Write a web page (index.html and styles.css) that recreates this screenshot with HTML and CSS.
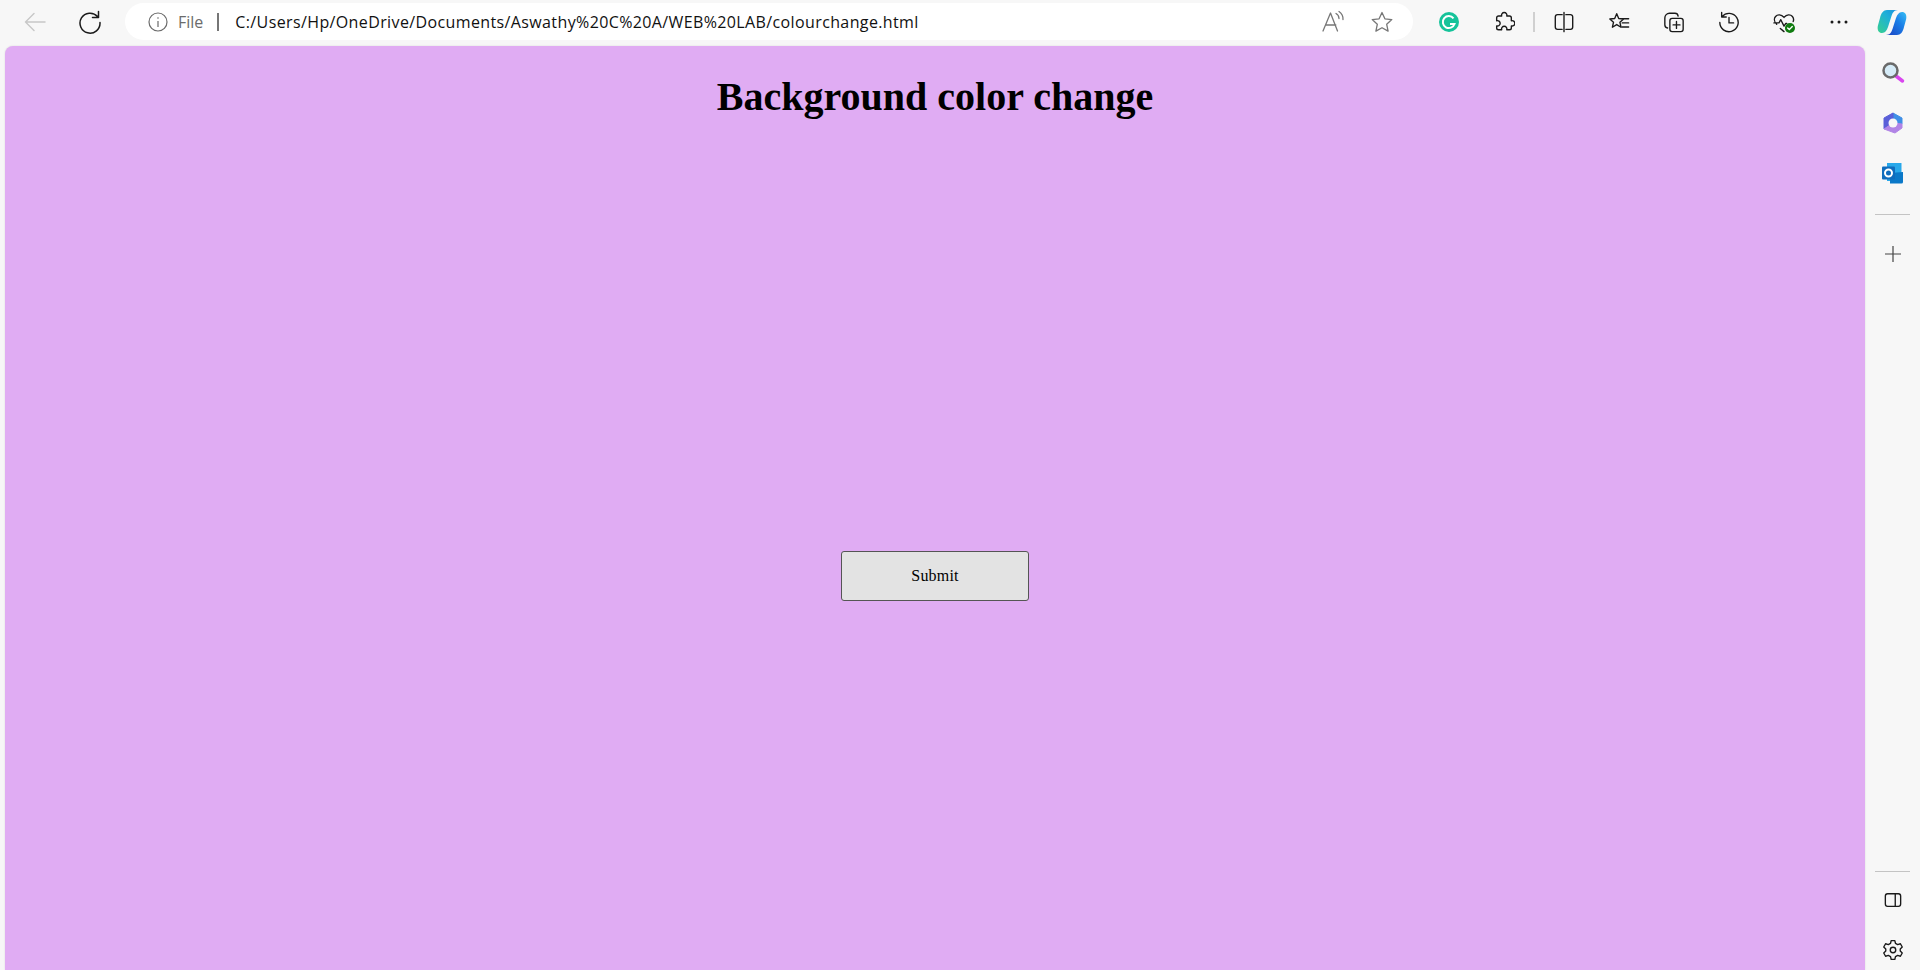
FILE: index.html
```html
<!DOCTYPE html>
<html lang="en">
<head>
    <meta charset="UTF-8">
    <title>Background color change</title>
    <link rel="stylesheet" href="styles.css">
</head>
<body>
    <header class="toolbar">
        <div class="nav">
            <svg class="icon back" viewBox="0 0 24 24"><path d="M22 12H2.500M11 3.500 2.500 12l8.500 8.500"/></svg>
            <svg class="icon" viewBox="0 0 24 24"><path d="M19.500 6.500A10 10 0 1 0 22 12.500M20.500 1.500v6h-6"/></svg>
        </div>
        <div class="address">
            <svg class="info" viewBox="0 0 20 20"><circle cx="10" cy="10" r="9"/><path d="M10 9v6M10 5.200v1.600"/></svg>
            <span class="scheme">File</span>
            <span class="bar"></span>
            <span class="url">C:/Users/Hp/OneDrive/Documents/Aswathy%20C%20A/WEB%20LAB/colourchange.html</span>
            <svg class="addr-icon read" viewBox="0 0 24 24"><path d="M2 21 9.500 3l7 18M4.800 15h10M15 3.500a6 6 0 0 1 3 5M18 1.500a9 9 0 0 1 4 8"/></svg>
            <svg class="addr-icon" viewBox="0 0 24 24"><path d="m12 2.500 2.900 6.300 6.900.8-5.100 4.700 1.400 6.800-6.100-3.400-6.100 3.400 1.400-6.800-5.100-4.700 6.900-.8z"/></svg>
        </div>
        <div class="tools">
            <span class="slot">
                <svg class="grammarly" viewBox="0 0 20 20"><circle cx="10" cy="10" r="10" fill="#15c39a"/><path d="M14.500 6.300A6 6 0 1 0 15.500 12H11" fill="none" stroke="#fff" stroke-width="2"/></svg>
            </span>
            <span class="slot">
                <svg class="icon" viewBox="0 0 24 24"><path d="M9.500 5.500a2.900 2.900 0 1 1 5.500 0H18a2 2 0 0 1 2 2v3.200a2.900 2.900 0 1 1 0 5.500v2.300a2 2 0 0 1-2 2h-3a2.900 2.900 0 1 0-5.500 0H6a2 2 0 0 1-2-2v-2.300a2.900 2.900 0 1 0 0-5.500V7.500a2 2 0 0 1 2-2z"/></svg>
            </span>
            <span class="sep"></span>
            <span class="slot">
                <svg class="icon" viewBox="0 0 24 24"><path d="M10 4H5a2.500 2.500 0 0 0-2.500 2.500v11A2.500 2.500 0 0 0 5 20h5M14 4h5a2.500 2.500 0 0 1 2.500 2.500v11A2.500 2.500 0 0 1 19 20h-5M12 1.500v21"/></svg>
            </span>
            <span class="slot">
                <svg class="icon" viewBox="0 0 24 24"><path d="m9.500 3 2.200 5.200 5.300.5-4 3.600 1.200 5.400-4.700-2.900-4.700 2.900 1.200-5.400-4-3.600 5.300-.5zM16 8.500h6.500M15.500 13h7M15.500 17.500h7"/></svg>
            </span>
            <span class="slot">
                <svg class="icon" viewBox="0 0 24 24"><rect x="7.500" y="8" width="14.500" height="14.500" rx="2.500"/><path d="M14.700 11.500v7.500M11 15.200h7.500M5 18.500A3.500 3.500 0 0 1 2 15V7.500A5 5 0 0 1 7 2.500h6a3.500 3.500 0 0 1 3.500 3"/></svg>
            </span>
            <span class="slot">
                <svg class="icon" viewBox="0 0 24 24"><path d="M4.500 6A10 10 0 1 1 2 12.500M4 1.500v5h5M12 7v6h5"/></svg>
            </span>
            <span class="slot">
                <svg class="icon" viewBox="0 0 24 24"><path d="M4 14.500C1 11.500 1 8 2.800 6c2.200-2.500 6.200-2.400 9.200 1 3-3.400 7-3.500 9.200-1 1.300 1.500 1.600 3.500.8 5.500M1 13h5.500l2-3.500 3.500 7 2-3h1M8 19l4 3.500"/><circle cx="18.500" cy="18.500" r="5.500" fill="#107c10" stroke="none"/><path class="tick" d="m16 18.500 1.800 1.800 3.200-3.400"/></svg>
            </span>
            <span class="slot">
                <svg class="more" viewBox="0 0 20 4"><circle cx="3" cy="2" r="1.500"/><circle cx="10" cy="2" r="1.500"/><circle cx="17" cy="2" r="1.500"/></svg>
            </span>
            <span class="copilot-slot">
                <svg class="copilot" viewBox="0 0 30 27">
                    <defs>
                        <linearGradient id="copA" x1="0" y1="1" x2="1" y2="0"><stop offset="0" stop-color="#37d08f"/><stop offset=".6" stop-color="#1fb0d8"/><stop offset="1" stop-color="#1a8fe0"/></linearGradient>
                        <linearGradient id="copB" x1="0" y1="1" x2="1" y2="0"><stop offset="0" stop-color="#1b3fc0"/><stop offset=".6" stop-color="#1b80e8"/><stop offset="1" stop-color="#38c0f5"/></linearGradient>
                    </defs>
                    <path d="M10 1H21C17 1 15.500 4 14.500 7L11 18C10 21 8 24 5 24C2 24 0 21.500 .8 17L3 9C4 4 6.500 1 10 1z" fill="url(#copA)"/>
                    <path d="M20 26H9C13 26 14.500 23 15.500 20L19 9C20 6 22 3 25 3C28 3 30 5.500 29.200 10L27 18C26 23 23.500 26 20 26z" fill="url(#copB)"/>
                </svg>
            </span>
        </div>
    </header>

    <div class="content">
        <main class="page">
            <h1>Background color change</h1>
            <button type="button" class="submit">Submit</button>
        </main>

        <aside class="sidebar">
            <svg class="side-icon" viewBox="0 0 24 24">
                <path d="m15 15 6.500 5" stroke="#d946ef" stroke-width="3.500" stroke-linecap="round" fill="none"/>
                <circle cx="9.500" cy="9.500" r="7" fill="#d6ecf8" stroke="#6a6a6a" stroke-width="2.500"/>
            </svg>
            <svg class="side-icon" viewBox="0 0 24 24">
                <g stroke-linejoin="round" stroke-width="1">
                    <path d="M12 2 21 7v6l-9-1z" fill="#3f8fe6" stroke="#3f8fe6"/>
                    <path d="M12 2 3 7v11l9-6z" fill="#5a5fd8" stroke="#5a5fd8"/>
                    <path d="M21 13v4l-7 5-11-4 9-6z" fill="#b184e6" stroke="#b184e6"/>
                </g>
                <circle cx="12" cy="12" r="4.500" fill="#f7f7f7"/>
            </svg>
            <svg class="side-icon" viewBox="0 0 24 24">
                <path d="M6 2h14.500v18H6z" fill="#28a8ea"/>
                <path d="M9 12l13-1v10a1.500 1.500 0 0 1-1.500 1.500H9z" fill="#0a78c8"/>
                <rect x="1" y="5.500" width="13" height="13" rx="1" fill="#0f6cbd"/>
                <circle cx="7.500" cy="12" r="3.500" fill="none" stroke="#fff" stroke-width="2"/>
            </svg>
            <span class="side-rule"></span>
            <svg class="side-plus" viewBox="0 0 16 16"><path d="M8 0v16M0 8h16"/></svg>
            <span class="side-rule low"></span>
            <svg class="side-tool" viewBox="0 0 20 20"><rect x="1.500" y="3" width="17" height="14" rx="2.500"/><path d="M12.500 3v14"/></svg>
            <svg class="side-tool gear" viewBox="0 0 24 24"><circle cx="12" cy="12" r="3"/><path d="M10 1.800h4l.7 3 2.400 1.300 3-.9 2 3.500-2.200 2.100v2.400l2.200 2.100-2 3.500-3-.9-2.400 1.300-.7 3h-4l-.7-3-2.400-1.300-3 .9-2-3.500 2.200-2.100v-2.400L1.900 8.700l2-3.500 3 .9 2.400-1.300z"/></svg>
        </aside>
    </div>
</body>
</html>
```

FILE: styles.css
```css
html, body {
    margin: 0;
    height: 100%;
    overflow: hidden;
}

body {
    background: #f7f7f7;
    display: flex;
    flex-direction: column;
    font-family: "Liberation Serif", serif;
}

/* barre du navigateur */
.toolbar {
    height: 46px;
    flex: none;
    display: flex;
    align-items: flex-start;
}

.nav {
    width: 125px;
    height: 44px;
    flex: none;
    display: flex;
    align-items: center;
    gap: 31px;
    padding-left: 23px;
    box-sizing: border-box;
}

.icon {
    width: 22px;
    height: 22px;
    flex: none;
    fill: none;
    stroke: #1a1a1a;
    stroke-width: 1.500;
    stroke-linecap: round;
    stroke-linejoin: round;
}

.nav .icon {
    width: 24px;
    height: 24px;
}

.icon.back {
    stroke: #c8c8c8;
}

.tick {
    stroke: #fff;
    stroke-width: 1.500;
}

.address {
    width: 1288px;
    height: 37px;
    margin-top: 3px;
    flex: none;
    display: flex;
    align-items: center;
    background: #fff;
    border-radius: 19px;
    padding: 0 19px 0 23px;
    box-sizing: border-box;
    font-family: "Open Sans", sans-serif;
    font-size: 16px;
}

.info {
    width: 20px;
    height: 20px;
    flex: none;
    fill: none;
    stroke: #6b6b6b;
    stroke-width: 1.200;
}

.scheme {
    margin-left: 10px;
    color: #6b6b6b;
}

.bar {
    width: 2px;
    height: 18px;
    background: #767676;
    margin: 0 16px 0 14px;
}

.url {
    flex: 1;
    color: #111;
    white-space: nowrap;
    letter-spacing: .38px;
}

.addr-icon {
    width: 24px;
    height: 24px;
    flex: none;
    fill: none;
    stroke: #777;
    stroke-width: 1.300;
    stroke-linejoin: round;
    stroke-linecap: round;
}

.addr-icon.read {
    margin-right: 25px;
}

.tools {
    height: 44px;
    flex: 1;
    display: flex;
    align-items: center;
    padding-left: 8px;
}

.slot {
    width: 55px;
    flex: none;
    display: flex;
    justify-content: center;
}

.sep {
    width: 2px;
    height: 20px;
    flex: none;
    background: #d0d0d0;
    margin: 0 1px 0 2px;
}

.grammarly {
    width: 20px;
    height: 20px;
}

.more {
    width: 20px;
    height: 4px;
    fill: #1a1a1a;
}

.copilot-slot {
    flex: none;
    margin-left: 11px;
    display: flex;
}

.copilot {
    width: 30px;
    height: 27px;
}

/* contenu de la page */
.content {
    flex: 1;
    min-height: 0;
    display: flex;
    padding-left: 5px;
}

.page {
    width: 1860px;
    flex: none;
    background: #e0acf3;
    border-radius: 8px 8px 0 0;
    box-shadow: 0 0 2px rgba(0, 0, 0, .12);
    display: flex;
    flex-direction: column;
    align-items: center;
}

h1 {
    margin: 28px 0 0;
    font-size: 40px;
    line-height: 46px;
    font-weight: bold;
    color: #000;
}

.submit {
    width: 188px;
    height: 50px;
    margin-top: 431px;
    background: #e3e3e3;
    border: 1px solid #555;
    border-radius: 3px;
    font-family: "Liberation Serif", serif;
    font-size: 16px;
    letter-spacing: .2px;
    color: #000;
    padding: 0;
}

/* barre laterale */
.sidebar {
    flex: 1;
    display: flex;
    flex-direction: column;
    align-items: center;
    padding-top: 15px;
}

.side-icon {
    width: 24px;
    height: 24px;
    flex: none;
    margin-bottom: 26px;
}

.side-rule {
    width: 35px;
    height: 1px;
    flex: none;
    background: #c4c4c4;
    margin: 3px 0 31px;
}

.side-rule.low {
    margin: auto 0 19px;
}

.side-plus {
    width: 16px;
    height: 16px;
    flex: none;
    stroke: #444;
    stroke-width: 1.200;
}

.side-tool {
    width: 18px;
    height: 18px;
    flex: none;
    fill: none;
    stroke: #1a1a1a;
    stroke-width: 1.500;
    stroke-linejoin: round;
}

.side-tool.gear {
    width: 22px;
    height: 22px;
    margin: 30px 0 9px;
}
```
